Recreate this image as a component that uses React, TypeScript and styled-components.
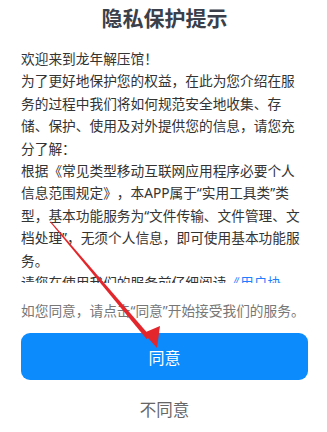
import React from "react";
import styled, { createGlobalStyle } from "styled-components";

const Global = createGlobalStyle`
  html, body { margin: 0; padding: 0; background: #ffffff; }
  body { font-family: "Noto Sans", "Noto Sans CJK SC", sans-serif; }
`;

const Page = styled.div`
  position: relative;
  width: 327px;
  height: 432px;
  box-sizing: border-box;
  padding: 0 19px 0 21px;
  display: flex;
  flex-direction: column;
  background: #fff;
  overflow: hidden;
`;

const Title = styled.h1`
  margin: 0;
  height: 34px;
  line-height: 34px;
  text-align: center;
  font-size: 21px;
  font-weight: 700;
  color: #3b3f4a;
  font-family: "Noto Sans CJK SC", sans-serif;
`;

const Scroll = styled.div`
  margin-top: 14px;
  height: 235px;
  overflow: hidden;
  flex-shrink: 0;
`;

const Body = styled.p`
  margin: 0;
  font-size: 13.7px;
  line-height: 22.4px;
  color: #333333;
  text-spacing-trim: space-all;
`;

const Link = styled.span`
  color: #1f7fff;
`;

const Note = styled.p`
  margin: 17px 0 0;
  font-size: 13.7px;
  line-height: 22px;
  color: #777777;
  text-spacing-trim: space-all;
`;

const Agree = styled.button`
  margin-top: 11px;
  height: 47px;
  width: 100%;
  border: none;
  border-radius: 9px;
  background: #0c8bfd;
  color: #ffffff;
  font-size: 16px;
  font-family: "Noto Sans CJK SC", sans-serif;
  padding: 0;
`;

const Disagree = styled.button`
  margin-top: 17px;
  height: 24px;
  line-height: 24px;
  border: none;
  background: transparent;
  color: #666666;
  font-size: 16.5px;
  font-family: "Noto Sans CJK SC", sans-serif;
  padding: 0;
  align-self: center;
`;

const Overlay = styled.svg`
  position: absolute;
  left: 0;
  top: 0;
  pointer-events: none;
`;

export default function App() {
  return (
    <>
      <Global />
      <Page>
        <Title>隐私保护提示</Title>
        <Scroll>
          <Body>
            欢迎来到龙年解压馆！
            <br />
            为了更好地保护您的权益，在此为您介绍在服务的过程中我们将如何规范安全地收集、存储、保护、使用及对外提供您的信息，请您充分了解：
            <br />
            根据《常见类型移动互联网应用程序必要个人信息范围规定》，本APP属于“实用工具类”类型，基本功能服务为“文件传输、文件管理、文档处理”，无须个人信息，即可使用基本功能服务。
            <br />
            请您在使用我们的服务前仔细阅读<Link>《用户协议》</Link>和<Link>《隐私政策》</Link>。
          </Body>
        </Scroll>
        <Note>如您同意，请点击“同意”开始接受我们的服务。</Note>
        <Agree>同意</Agree>
        <Disagree>不同意</Disagree>
        <Overlay width="327" height="432" viewBox="0 0 327 432">
          <path d="M50 222 L51 221.5 L150 336 L146.5 339 Z" fill="#e3262b" />
          <path d="M143.5 333 L160 326 L157 348 Z" fill="#e3262b" />
        </Overlay>
      </Page>
    </>
  );
}
